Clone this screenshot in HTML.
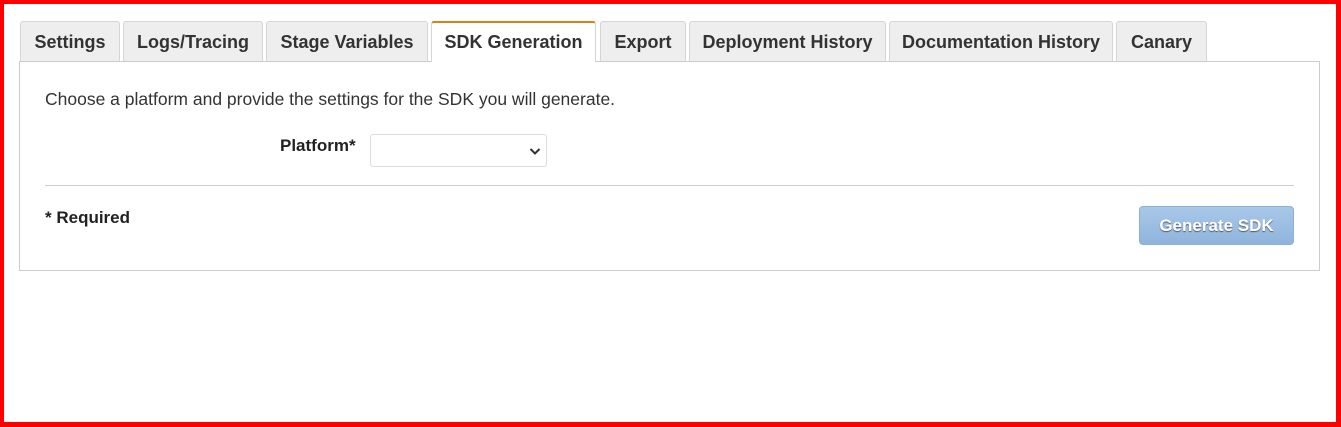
<!DOCTYPE html>
<html><head><meta charset="utf-8"><style>
*{box-sizing:border-box;margin:0;padding:0}
html,body{width:1341px;height:427px;overflow:hidden;background:#fff}
body{position:relative;font-family:"Liberation Sans",Arial,sans-serif;color:#333}
.frame{position:absolute;left:0;top:0;width:1341px;height:427px;border-style:solid;border-color:#f00;border-width:4px 5px 5px 4px}
.tab{position:absolute;top:21px;height:40px;background:#eee;border:1px solid #d5d5d5;border-bottom:none;border-radius:3px 3px 0 0;font-weight:bold;font-size:18px;color:#333;text-align:center;line-height:40px}
.tab.act{background:#fff;border-top:2px solid #e07f18;height:41px;line-height:38px;z-index:2}
.panel{position:absolute;left:19px;top:61px;width:1301px;height:210px;border:1px solid #ccc}
.txt{position:absolute;left:45px;top:89px;font-size:17.5px;color:#333}
.lbl{position:absolute;left:280px;top:136px;font-size:17px;font-weight:bold;color:#222}
.sel{position:absolute;left:370px;top:134px;width:177px;height:33px;border:1px solid #ddd;border-radius:3px;background:#fff}
.hr{position:absolute;left:45px;top:185px;width:1249px;height:1px;background:#ccc}
.req{position:absolute;left:45px;top:208px;font-size:17px;font-weight:bold;color:#222}
.btn{position:absolute;left:1139px;top:206px;width:155px;height:39px;border-radius:4px;background:linear-gradient(#a8c8e8,#8fb4dc);border:1px solid #8eb0d6;color:#fff;font-weight:bold;font-size:17px;text-align:center;line-height:37px;text-shadow:0 1px 1px #556}
</style></head><body>
<div class="panel"></div>
<div class="tab" style="left:20px;width:100px">Settings</div>
<div class="tab" style="left:123px;width:140px">Logs/Tracing</div>
<div class="tab" style="left:266px;width:162px">Stage Variables</div>
<div class="tab act" style="left:431px;width:165px">SDK Generation</div>
<div class="tab" style="left:600px;width:86px">Export</div>
<div class="tab" style="left:689px;width:197px">Deployment History</div>
<div class="tab" style="left:889px;width:224px">Documentation History</div>
<div class="tab" style="left:1116px;width:91px">Canary</div>
<div class="txt">Choose a platform and provide the settings for the SDK you will generate.</div>
<div class="lbl">Platform*</div>
<div class="sel"><svg style="position:absolute;left:158px;top:12px" width="12" height="9" viewBox="0 0 12 9"><path d="M1.5 2 L6 6.5 L10.5 2" stroke="#333" stroke-width="2" fill="none"/></svg></div>
<div class="hr"></div>
<div class="req">* Required</div>
<div class="btn">Generate SDK</div>
<div class="frame"></div>
</body></html>
